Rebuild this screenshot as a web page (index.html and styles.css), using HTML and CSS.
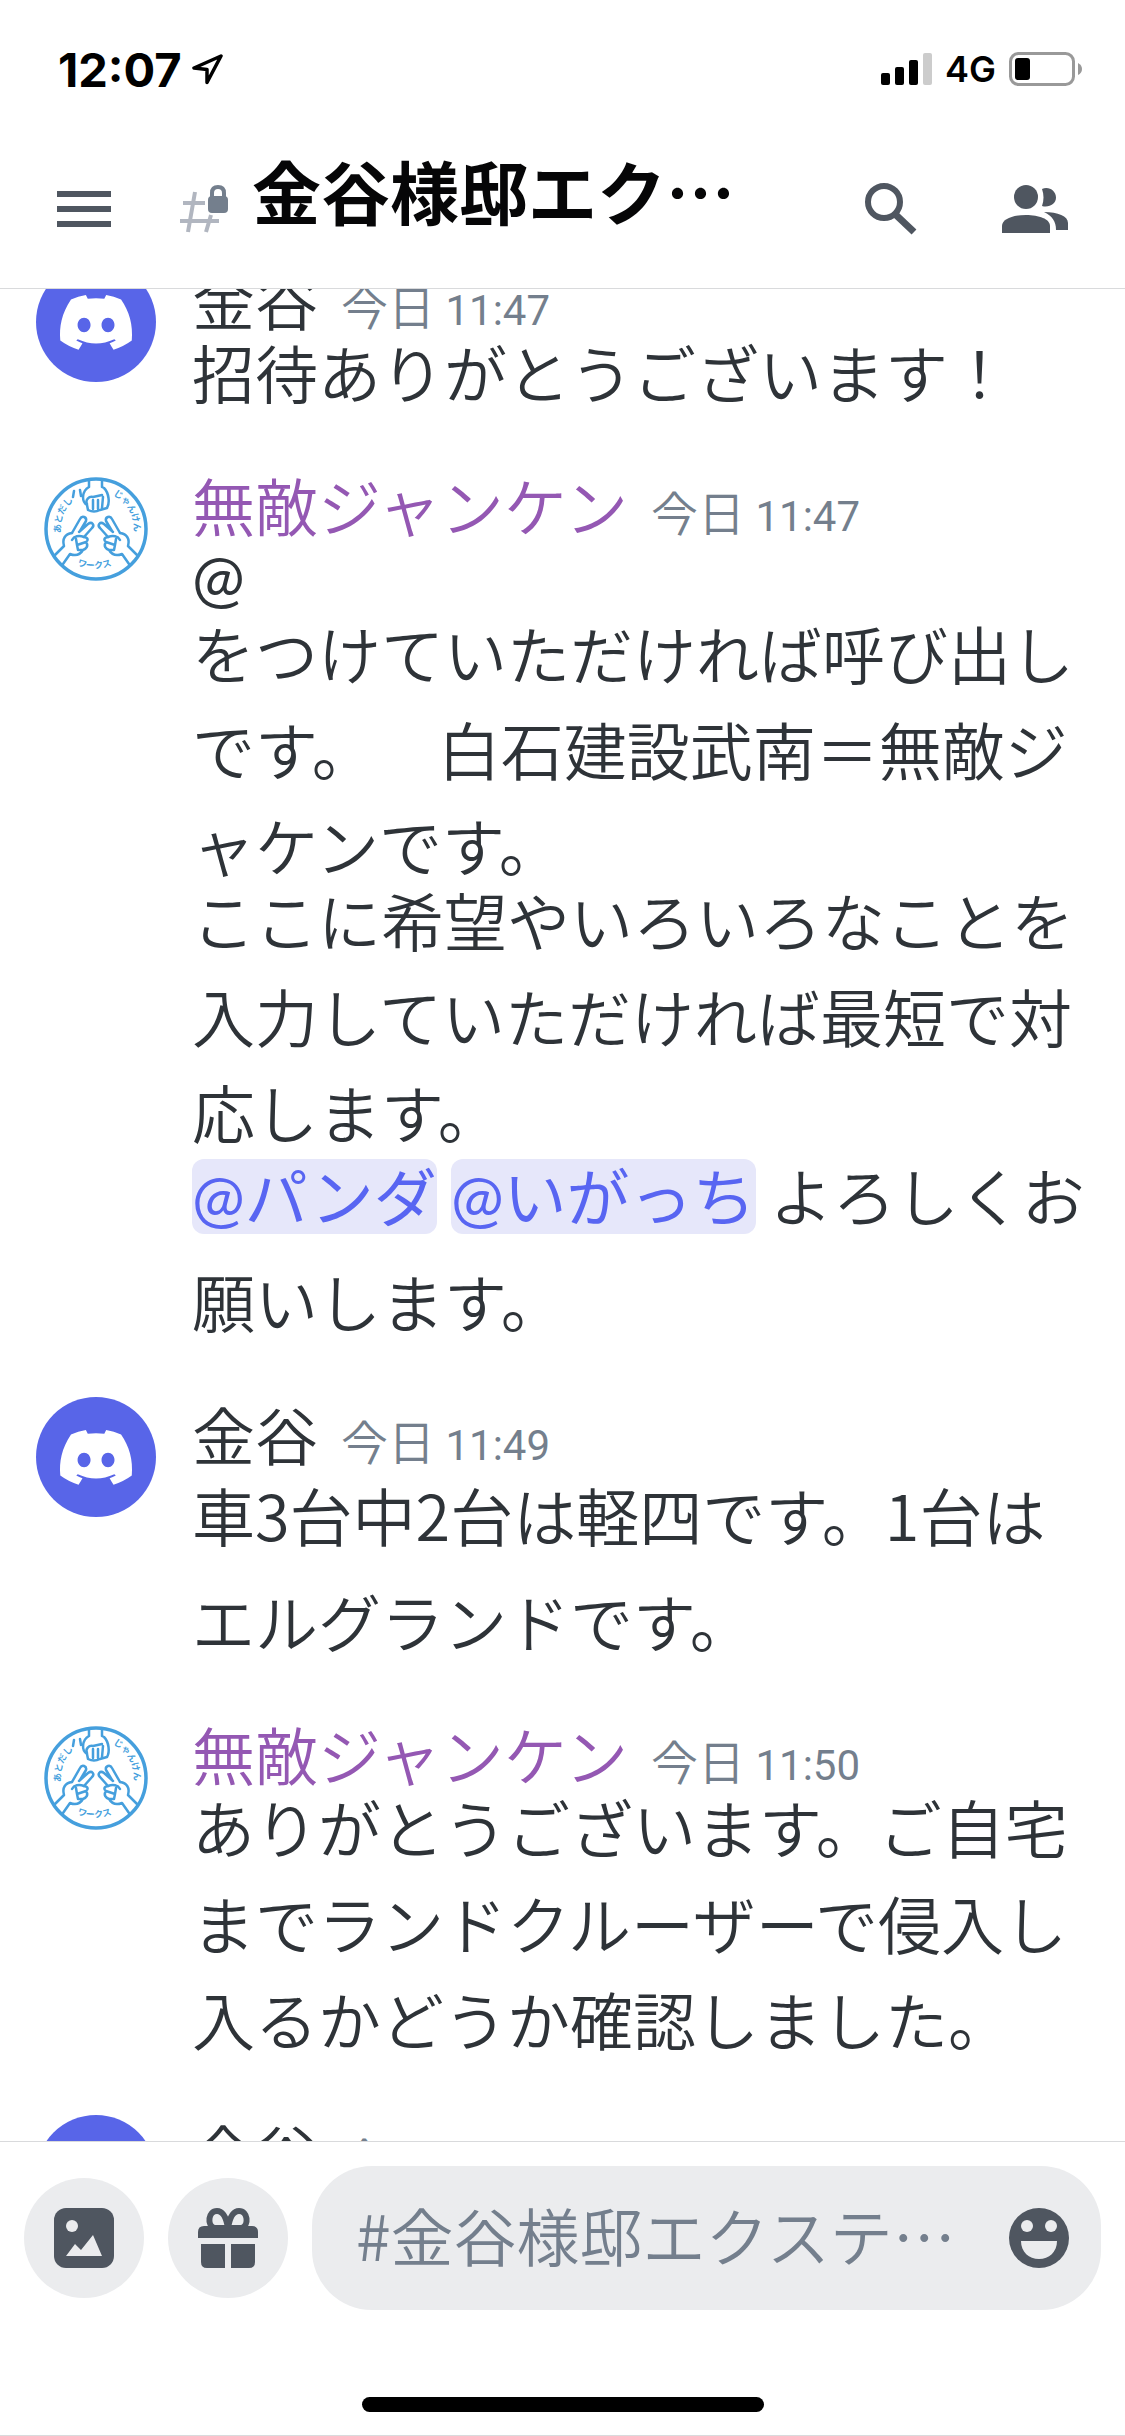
FILE: index.html
```html
<!DOCTYPE html>
<html lang="ja">
<head>
    <meta charset="UTF-8">
    <meta name="viewport" content="width=device-width, initial-scale=1.0">
    <title>金谷様邸エクステリア</title>
    <link rel="stylesheet" href="styles.css">
</head>
<body>

    <!-- Shared drawings -->
    <svg class="defs" aria-hidden="true">
        <symbol id="discord" viewBox="0 0 120 120">
            <circle cx="60" cy="60" r="60" fill="#5865e8"/>
            <path fill="#fff" transform="translate(24 33) scale(.567)" d="M107.7,8.07A105.15,105.15,0,0,0,81.47,0a72.06,72.06,0,0,0-3.36,6.83A97.68,97.68,0,0,0,49,6.83,72.37,72.37,0,0,0,45.64,0,105.89,105.89,0,0,0,19.39,8.09C2.79,32.65-1.71,56.6.54,80.21h0A105.73,105.73,0,0,0,32.71,96.36,77.7,77.7,0,0,0,39.6,85.25a68.42,68.42,0,0,1-10.85-5.18c.91-.66,1.8-1.34,2.66-2a75.57,75.57,0,0,0,64.32,0c.87.71,1.76,1.39,2.66,2a68.68,68.68,0,0,1-10.87,5.19,77,77,0,0,0,6.89,11.1A105.25,105.25,0,0,0,126.6,80.22h0C129.24,52.84,122.09,29.11,107.7,8.07ZM42.45,65.69C36.18,65.69,31,60,31,53s5-12.74,11.43-12.74S54,46,53.89,53,48.84,65.69,42.45,65.69Zm42.24,0C78.41,65.69,73.25,60,73.25,53s5-12.74,11.44-12.74S96.23,46,96.12,53,91.08,65.69,84.69,65.69Z"/>
        </symbol>
        <symbol id="janken" viewBox="0 0 120 120">
            <g fill="none" stroke="#459fdd" stroke-width="2.500" stroke-linecap="round" stroke-linejoin="round">
                <circle cx="60" cy="61" r="50" stroke-width="3.500"/>
                <!-- fist -->
                <path d="M53 12v7c-7 4-8 14-2 18l1 5c4 2 8 2 12 0l7-2c3-5 2-15-3-20l-2-1v-7"/>
                <path d="M51 36c-2-4 2-8 6-7l9-2M57 32v9M62 32v9M67 29l-1 11M38 23l-1 6M44 22l1 6"/>
                <!-- scissors -->
                <g id="hand">
                    <path d="M36 65l8-14c2-4 7-2 6 2l-6 10M43 64l9-8c4-3 7 1 4 4l-8 9"/>
                    <path d="M36 65c-7 1-10 6-8 13l-9 9M36 72c2-4 7-5 12-3c5 1 4 4 2 5c3 4 0 7-3 8c-3 5-8 6-13 4l-7 10M40 71l1 6 9-3M41 77l1 5 5 0"/>
                </g>
                <use href="#hand" transform="matrix(-1 0 0 1 120 0)"/>
            </g>
            <path id="arc-left" fill="none" d="M25 65A37 37 0 0 1 48 26"/>
            <path id="arc-right" fill="none" d="M77 27A38 38 0 0 1 96 73"/>
            <path id="arc-bottom" fill="none" d="M41 97Q60 106 86 93"/>
            <g class="seal-text">
                <text><textPath href="#arc-left">あとだし</textPath></text>
                <text><textPath href="#arc-right">じゃんけん</textPath></text>
                <text><textPath href="#arc-bottom">ワークス</textPath></text>
            </g>
        </symbol>
    </svg>

    <div class="status-bar">
        <span class="clock">12:07</span>
        <svg class="location" width="32" height="32" viewBox="0 0 32 32"><path d="M29 3L2 15l13 1.500v13z" fill="none" stroke="#000" stroke-width="3.500" stroke-linejoin="round"/></svg>
        <svg class="signal" width="51" height="34" viewBox="0 0 51 34">
            <rect x="0" y="21" width="9" height="12" rx="2"/>
            <rect x="14" y="15" width="9" height="18" rx="2"/>
            <rect x="28" y="8" width="9" height="25" rx="2"/>
            <rect x="42" y="1" width="9" height="32" rx="2" fill="#ccc"/>
        </svg>
        <span class="network">4G</span>
        <svg class="battery" width="74" height="34" viewBox="0 0 74 34">
            <rect x="1.500" y="1.500" width="63" height="31" rx="8" fill="none" stroke="#999" stroke-width="3"/>
            <rect x="6" y="6" width="15" height="22" rx="3"/>
            <path d="M69 11q4 2 4 6t-4 6z" fill="#999"/>
        </svg>
    </div>

    <header class="channel-bar">
        <button class="icon-btn" aria-label="メニュー">
            <svg width="54" height="38" viewBox="0 0 54 38"><path d="M0 4h54M0 19h54M0 34h54" stroke="#4f5660" stroke-width="6"/></svg>
        </button>
        <svg class="hash" width="50" height="48" viewBox="0 0 50 48">
            <path d="M4 18h22M1 36h39M16 7L9 47M32 30l-5 17" fill="none" stroke="#b1b6c0" stroke-width="4"/>
            <path d="M33 13V8q0-6 6-6t6 6v5" fill="none" stroke="#747f8d" stroke-width="4"/>
            <rect x="29" y="11" width="20" height="17" rx="4" fill="#747f8d"/>
        </svg>
        <h1 class="channel-name">金谷様邸エク…</h1>
        <button class="icon-btn" aria-label="検索">
            <svg width="54" height="54" viewBox="0 0 54 54"><circle cx="20" cy="20" r="16" fill="none" stroke="#4f5660" stroke-width="6"/><path d="M32 33l18 17" stroke="#4f5660" stroke-width="7"/></svg>
        </button>
        <button class="icon-btn" aria-label="メンバー">
            <svg width="66" height="48" viewBox="0 0 66 48" fill="#4f5660">
                <circle cx="24" cy="12" r="12"/>
                <path d="M0 48v-7c0-7 11-11 24-11s24 4 24 11v7z"/>
                <path d="M40 4c7-3 14 2 14 8.500S47 23 40 21c2-6 2-11 0-17zM42 27c14 0 24 4 24 11v7H54c0-9-4-14-12-18z"/>
            </svg>
        </button>
    </header>

    <main class="chat">
        <div class="messages">
            <article class="message">
                <svg class="avatar"><use href="#discord"/></svg>
                <div class="body">
                    <div class="head"><span class="author">金谷</span><time class="time">今日 <span class="digits">11:47</span></time></div>
                    <p>招待ありがとうございます！</p>
                </div>
            </article>

            <article class="message">
                <svg class="avatar"><use href="#janken"/></svg>
                <div class="body">
                    <div class="head"><span class="author purple">無敵ジャンケン</span><time class="time">今日 <span class="digits">11:47</span></time></div>
                    <p class="at">@</p>
                    <p>をつけていただければ呼び出しです。　白石建設武南＝無敵ジャケンです。</p>
                    <p>ここに希望やいろいろなことを入力していただければ最短で対応します。</p>
                    <p class="mixed"><span class="mention">@パンダ</span> <span class="mention">@いがっち</span> よろしくお願いします。</p>
                </div>
            </article>

            <article class="message">
                <svg class="avatar"><use href="#discord"/></svg>
                <div class="body">
                    <div class="head"><span class="author">金谷</span><time class="time">今日 <span class="digits">11:49</span></time></div>
                    <p class="mixed">車3台中2台は軽四です。1台はエルグランドです。</p>
                </div>
            </article>

            <article class="message">
                <svg class="avatar"><use href="#janken"/></svg>
                <div class="body">
                    <div class="head"><span class="author purple">無敵ジャンケン</span><time class="time">今日 <span class="digits">11:50</span></time></div>
                    <p>ありがとうございます。ご自宅までランドクルーザーで侵入し入るかどうか確認しました。</p>
                </div>
            </article>

            <article class="message">
                <svg class="avatar"><use href="#discord"/></svg>
                <div class="body">
                    <div class="head"><span class="author">金谷</span><time class="time">今日</time></div>
                </div>
            </article>
        </div>
    </main>

    <footer class="footer">
        <form class="composer">
            <button class="round-btn" type="button" aria-label="画像">
                <svg width="60" height="60" viewBox="0 0 60 60">
                    <rect width="60" height="60" rx="12" fill="#4f5660"/>
                    <circle cx="18" cy="18" r="6" fill="#ebecee"/>
                    <path d="M12 48l9-12 6 6 12-15 9 21z" fill="#ebecee"/>
                </svg>
            </button>
            <button class="round-btn" type="button" aria-label="ギフト">
                <svg width="60" height="60" viewBox="0 0 60 60" fill="#4f5660">
                    <path d="M6 18h48q6 0 6 6v6H0v-6q0-6 6-6zM3 36h24v24H9q-6 0-6-6zM33 36h24v18q0 6-6 6H33z"/>
                    <path d="M30 20C28 8 24 3 19 3c-9 0-10 14-3 17zM30 20C32 8 36 3 41 3c9 0 10 14 3 17z" fill="none" stroke="#4f5660" stroke-width="6"/>
                </svg>
            </button>
            <div class="input-box">
                <input class="input" type="text" aria-label="メッセージ" placeholder="#金谷様邸エクステ…">
                <button class="icon-btn" type="button" aria-label="絵文字">
                    <svg width="60" height="60" viewBox="0 0 60 60">
                        <circle cx="30" cy="30" r="30" fill="#4f5660"/>
                        <circle cx="18" cy="18" r="6" fill="#ebecee"/>
                        <circle cx="42" cy="18" r="6" fill="#ebecee"/>
                        <path d="M12 33h36c0 11-8 18-18 18s-18-7-18-18z" fill="#ebecee"/>
                    </svg>
                </button>
            </div>
        </form>
        <div class="home-indicator"></div>
    </footer>

</body>
</html>
```

FILE: styles.css
```css
* {
    box-sizing: border-box;
}

body {
    margin: 0;
    height: 100vh;
    display: flex;
    flex-direction: column;
    overflow: hidden;
    background-color: #fff;
    color: #2e3338;
    font-family: 'Noto Sans CJK JP', sans-serif;
    font-size: 63px;
    font-weight: 350;
    text-spacing-trim: space-all;
}

button {
    padding: 0;
    border: none;
    background: none;
    cursor: pointer;
}

svg {
    display: block;
}

.defs {
    position: absolute;
    width: 0;
    height: 0;
}

/* Status bar */
.status-bar {
    flex: none;
    display: flex;
    align-items: center;
    height: 138px;
    padding: 0 42px 0 58px;
    color: #000;
    font-family: Inter, sans-serif;
}

.clock {
    font-size: 47px;
    font-weight: 700;
}

.location {
    margin-left: 10px;
}

.signal {
    margin-left: auto;
}

.network {
    margin: 0 13px;
    font-size: 36px;
    font-weight: 600;
}

/* Channel header */
.channel-bar {
    flex: none;
    display: flex;
    align-items: center;
    height: 151px;
    padding: 0 57px 8px 57px;
    border-bottom: 1px solid #d9dadc;
}

.channel-bar .icon-btn + .icon-btn {
    margin-left: 84px;
}

.hash {
    flex: none;
    margin: 0 23px 0 68px;
}

.channel-name {
    flex: 1;
    margin: 0;
    padding-bottom: 38px;
    overflow: hidden;
    white-space: nowrap;
    color: #060607;
    font-size: 69px;
    font-weight: 700;
    line-height: 96px;
}

/* Messages */
.chat {
    flex: 1;
    min-height: 0;
    overflow: hidden;
}

/* list is scrolled a little under the header */
.messages {
    display: flex;
    flex-direction: column;
    gap: 37px;
    margin-top: -39px;
}

.message {
    display: flex;
    gap: 36px;
    padding: 0 24px 0 36px;
}

.avatar {
    flex: none;
    width: 120px;
    height: 120px;
    margin-top: 12px;
}

.seal-text {
    fill: #459fdd;
    font-size: 9px;
    font-weight: 700;
}

.body {
    flex: 1;
    line-height: 96px;
    line-break: anywhere;
}

.head {
    display: flex;
    align-items: baseline;
    gap: 23px;
    height: 94px;
}

.purple {
    color: #9458b3;
}

.time {
    color: #747f8d;
    font-size: 47px;
}

.digits {
    font-family: Roboto, sans-serif;
    font-size: 42px;
    font-weight: 400;
}

.body p {
    margin: -21px 0 0;
}

/* lines with latin characters are set a bit looser */
.body .mixed {
    margin: -18px 0 -5px;
    line-height: 106px;
}

.at,
.mention {
    font-family: Lato, 'Noto Sans CJK JP', sans-serif;
    font-weight: 400;
}

.mention {
    border-radius: 12px;
    background-color: #e6e7fa;
    color: #5865f2;
    line-height: 1;
}

/* Composer */
.footer {
    flex: none;
    border-top: 1px solid #d9dadc;
    border-bottom: 1px solid #d9dadc;
}

.composer {
    display: flex;
    align-items: center;
    gap: 24px;
    padding: 24px;
}

.round-btn {
    display: flex;
    flex: none;
    align-items: center;
    justify-content: center;
    width: 120px;
    height: 120px;
    border-radius: 50%;
    background-color: #ebecee;
}

.input-box {
    display: flex;
    flex: 1;
    align-items: center;
    min-width: 0;
    height: 144px;
    padding: 0 32px 0 44px;
    border-radius: 60px;
    background-color: #ebecee;
}

.input {
    flex: 1;
    min-width: 0;
    padding: 0 0 10px;
    border: none;
    outline: none;
    background: none;
    color: #2e3338;
    font-family: inherit;
    font-size: 63px;
    font-weight: inherit;
}

.input::placeholder {
    color: #747f8d;
}

.home-indicator {
    width: 402px;
    height: 15px;
    margin: 63px auto 23px;
    border-radius: 8px;
    background-color: #000;
}
```
